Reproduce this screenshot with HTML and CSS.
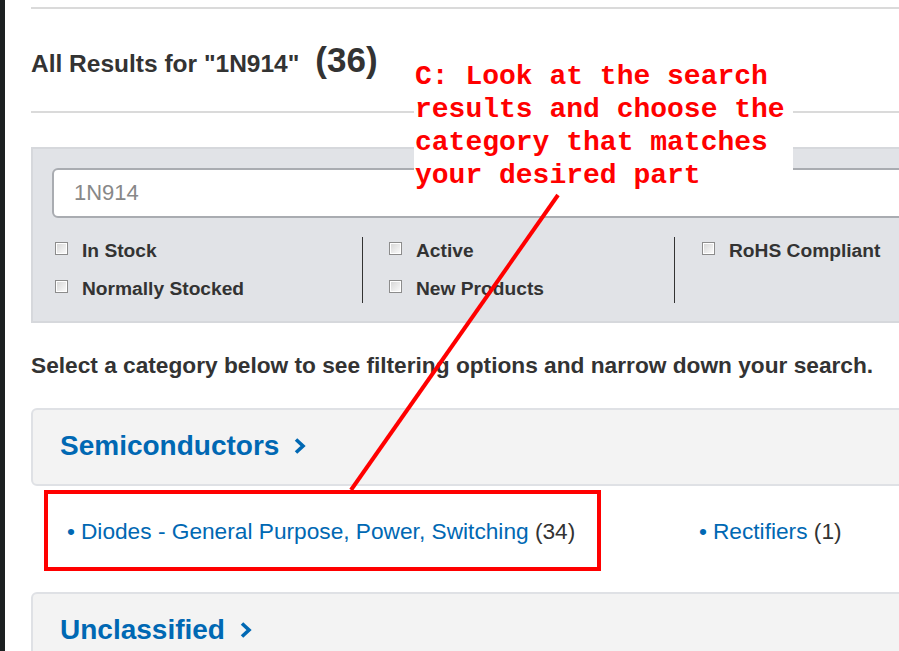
FILE: index.html
```html
<!DOCTYPE html>
<html lang="en">

<head>
    <meta charset="UTF-8" />
    <meta name="viewport" content="width=device-width, initial-scale=1.0" />
    <title>Search Results - 1N914</title>
    <link rel="stylesheet" href="styles.css">
</head>

<body>
    <div class="app">
        <div class="edge"></div>
        <main class="page">
            <hr class="rule">
            <h1 class="results-title">All Results for "1N914" <span class="count">(36)</span></h1>
            <hr class="rule">

            <section class="search-panel">
                <input class="search-box" type="text" value="1N914" />
                <div class="filters">
                    <div class="filter-col">
                        <label class="filter"><span class="check"></span>In Stock</label>
                        <label class="filter"><span class="check"></span>Normally Stocked</label>
                    </div>
                    <div class="filter-col">
                        <label class="filter"><span class="check"></span>Active</label>
                        <label class="filter"><span class="check"></span>New Products</label>
                    </div>
                    <div class="filter-col">
                        <label class="filter"><span class="check"></span>RoHS Compliant</label>
                    </div>
                </div>
            </section>

            <p class="hint">Select a category below to see filtering options and narrow down your search.</p>

            <div class="category">
                <a href="#" class="category-head">Semiconductors
                    <svg class="chevron" width="12" height="18" viewBox="0 0 12 18">
                        <polyline points="2,2.5 9,9 2,15.5" />
                    </svg>
                </a>
                <ul class="subcats">
                    <li><a href="#">Diodes - General Purpose, Power, Switching</a> <span class="qty">(34)</span></li>
                    <li><a href="#">Rectifiers</a> <span class="qty">(1)</span></li>
                </ul>
            </div>

            <div class="category">
                <a href="#" class="category-head">Unclassified
                    <svg class="chevron" width="12" height="18" viewBox="0 0 12 18">
                        <polyline points="2,2.5 9,9 2,15.5" />
                    </svg>
                </a>
            </div>
        </main>
    </div>

    <!-- annotation layer -->
    <div class="callout">C: Look at the search
results and choose the
category that matches
your desired part</div>
    <svg class="pointer" width="899" height="651">
        <line x1="558" y1="195" x2="351" y2="490" />
    </svg>
    <div class="highlight"></div>
</body>

</html>
```

FILE: styles.css
```css
* {
    box-sizing: border-box;
    margin: 0;
    padding: 0;
}

html,
body {
    overflow: hidden;
}

body {
    font-family: 'Liberation Sans', Arial, sans-serif;
    background: white;
    color: #333;
    min-height: 100vh;
}

.app {
    display: flex;
    min-height: 100vh;
}

.edge {
    width: 5px;
    flex: none;
    background: #1c2021;
}

.page {
    flex: none;
    width: 1300px;
    padding: 7px 0 0 26px;
}

.rule {
    border: none;
    height: 2px;
    background: #dadada;
}

.results-title {
    display: flex;
    align-items: baseline;
    gap: 16px;
    margin: 31px 0 27px;
    font-size: 24.5px;
    line-height: 40px;
    font-weight: bold;
}

.results-title .count {
    font-size: 35px;
}

.search-panel {
    margin-top: 34px;
    background: #e1e3e7;
    border-top: 2px solid #d6d8dc;
    border-bottom: 2px solid #d6d8dc;
    border-left: 2px solid #d6d8dc;
    padding: 19px 0 18px 19px;
}

.search-box {
    display: block;
    width: 1100px;
    height: 50px;
    padding-left: 20px;
    border: 2px solid #a9acb1;
    border-radius: 6px;
    background: white;
    font-family: 'Liberation Sans', Arial, sans-serif;
    font-size: 22px;
    color: #888;
}

.filters {
    display: flex;
    margin-top: 19px;
    padding-left: 3px;
}

.filter-col {
    width: 307px;
    display: flex;
    flex-direction: column;
    gap: 10px;
}

.filter-col + .filter-col {
    width: 312px;
    border-left: 1px solid #333;
    padding-left: 26px;
}

.filter-col:last-child {
    padding-left: 27px;
}

.filter {
    display: flex;
    align-items: flex-start;
    height: 28px;
    line-height: 28px;
    font-size: 19.2px;
    font-weight: bold;
    color: #333;
}

.check {
    flex: none;
    width: 13px;
    height: 13px;
    margin: 5px 14px 0 0;
    border: 1px solid #8c8c8c;
    box-shadow: inset 0 0 0 1px #fff;
    background: linear-gradient(135deg, #d4d4d4, #fdfdfd);
}

.hint {
    margin: 28px 0 29px;
    font-size: 22.7px;
    line-height: 28px;
    font-weight: bold;
}

.category-head {
    display: flex;
    align-items: center;
    gap: 15px;
    padding: 22px 27px 24px;
    border: 2px solid #dfe1e5;
    border-radius: 6px;
    background: #f3f3f3;
    font-size: 28px;
    line-height: 28px;
    font-weight: bold;
    color: #0068b3;
    text-decoration: none;
}

.chevron polyline {
    fill: none;
    stroke: #0068b3;
    stroke-width: 3.6;
}

.subcats {
    list-style: none;
    display: grid;
    grid-template-columns: 632px 632px;
    padding: 30px 0 46px 36px;
    font-size: 22.7px;
    line-height: 30px;
}

.subcats li::before {
    content: '\2022';
    color: #0068b3;
    margin-right: 6px;
}

.subcats a {
    color: #0068b3;
    text-decoration: none;
}

.subcats .qty {
    color: #333;
}

/* annotation layer */
.callout {
    position: absolute;
    left: 414px;
    top: 60px;
    width: 379px;
    height: 110px;
    padding-left: 1px;
    background: white;
    white-space: pre;
    font-family: 'Liberation Mono', 'Courier New', monospace;
    font-size: 28px;
    line-height: 33px;
    font-weight: bold;
    color: #ff0000;
}

.pointer {
    position: absolute;
    left: 0;
    top: 0;
}

.pointer line {
    stroke: #ff0000;
    stroke-width: 4;
}

.highlight {
    position: absolute;
    left: 44px;
    top: 490px;
    width: 557px;
    height: 81px;
    border: 4px solid #ff0000;
}
```
